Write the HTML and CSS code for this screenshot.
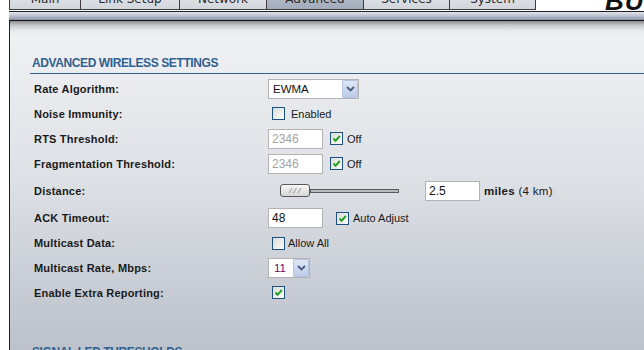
FILE: index.html
```html
<!DOCTYPE html>
<html>
<head>
<meta charset="utf-8">
<link rel="stylesheet" href="styles.css">
</head>
<body>
<div class="top">
  <nav class="tabs">
    <span class="tab t-main">Main</span>
    <span class="tab t-link">Link Setup</span>
    <span class="tab t-net">Network</span>
    <span class="tab t-adv sel">Advanced</span>
    <span class="tab t-srv">Services</span>
    <span class="tab t-sys">System</span>
  </nav>
  <span class="logo">BULLET</span>
</div>
<div class="bar"></div>
<div class="panel">
  <h2 class="sec">ADVANCED WIRELESS SETTINGS</h2>
  <div class="form">
    <div class="row h25">
      <span class="lbl">Rate Algorithm:</span>
      <span class="ctl">
        <span class="sel-box w90"><span class="val">EWMA</span><span class="arrow"><svg width="9" height="6" viewBox="0 0 9 6"><path d="M1 1 L4.5 4.5 L8 1" stroke="#4a5d80" stroke-width="1.8" fill="none"/></svg></span></span>
      </span>
    </div>
    <div class="row h25">
      <span class="lbl">Noise Immunity:</span>
      <span class="ctl ind">
        <span class="cb"></span><span class="txt g6">Enabled</span>
      </span>
    </div>
    <div class="row h25">
      <span class="lbl">RTS Threshold:</span>
      <span class="ctl">
        <span class="inp dis">2346</span>
        <span class="cb m7"><svg width="9" height="9" viewBox="0 0 9 9"><path d="M1.5 4.5 L3.6 6.8 L7.8 2" stroke="#22a022" stroke-width="2" fill="none"/></svg></span><span class="txt g4">Off</span>
      </span>
    </div>
    <div class="row h25">
      <span class="lbl">Fragmentation Threshold:</span>
      <span class="ctl">
        <span class="inp dis">2346</span>
        <span class="cb m7"><svg width="9" height="9" viewBox="0 0 9 9"><path d="M1.5 4.5 L3.6 6.8 L7.8 2" stroke="#22a022" stroke-width="2" fill="none"/></svg></span><span class="txt g4">Off</span>
      </span>
    </div>
    <div class="row h29">
      <span class="lbl">Distance:</span>
      <span class="ctl">
        <span class="slider">
          <span class="knob"><svg width="14" height="5" viewBox="0 0 14 5"><path d="M1 5 L4 0 M5.5 5 L8.5 0 M10 5 L13 0" stroke="#9a9a9a" stroke-width="1" fill="none"/></svg></span>
          <span class="track"></span>
        </span>
        <span class="inp dist">2.5</span>
        <span class="unit"><b>miles</b> (4 km)</span>
      </span>
    </div>
    <div class="row h26">
      <span class="lbl">ACK Timeout:</span>
      <span class="ctl">
        <span class="inp">48</span>
        <span class="cb m13"><svg width="9" height="9" viewBox="0 0 9 9"><path d="M1.5 4.5 L3.6 6.8 L7.8 2" stroke="#22a022" stroke-width="2" fill="none"/></svg></span><span class="txt g4">Auto Adjust</span>
      </span>
    </div>
    <div class="row h24">
      <span class="lbl">Multicast Data:</span>
      <span class="ctl ind">
        <span class="cb"></span><span class="txt g3">Allow All</span>
      </span>
    </div>
    <div class="row h25">
      <span class="lbl">Multicast Rate, Mbps:</span>
      <span class="ctl">
        <span class="sel-box w42"><span class="val purple">11</span><span class="arrow"><svg width="9" height="6" viewBox="0 0 9 6"><path d="M1 1 L4.5 4.5 L8 1" stroke="#4a5d80" stroke-width="1.8" fill="none"/></svg></span></span>
      </span>
    </div>
    <div class="row h25">
      <span class="lbl">Enable Extra Reporting:</span>
      <span class="ctl ind">
        <span class="cb"><svg width="9" height="9" viewBox="0 0 9 9"><path d="M1.5 4.5 L3.6 6.8 L7.8 2" stroke="#22a022" stroke-width="2" fill="none"/></svg></span>
      </span>
    </div>
  </div>
  <h2 class="sec sec2">SIGNAL LED THRESHOLDS</h2>
</div>
</body>
</html>
```
FILE: styles.css
```css
html, body {
  margin: 0;
  padding: 0;
  background: #ffffff;
  overflow: hidden;
  width: 644px;
  height: 350px;
}

body {
  font-family: "Liberation Sans", Arial, sans-serif;
  color: #1c1c1c;
}

.top {
  height: 10px;
  overflow: hidden;
  display: flex;
  align-items: flex-end;
  padding-left: 9px;
}

.tabs {
  display: flex;
  align-items: flex-end;
  flex-shrink: 0;
}

.tab {
  box-sizing: border-box;
  height: 26px;
  padding-top: 4px;
  line-height: 22px;
  text-align: center;
  font-family: "DejaVu Sans", Verdana, sans-serif;
  font-size: 12px;
  color: #2a2a2a;
  background: linear-gradient(to bottom, #eceef1, #d2d6dc);
  border-right: 1px solid #3c3c3c;
  border-bottom: 1px solid #3c3c3c;
  flex-shrink: 0;
  white-space: nowrap;
}

.tab.sel {
  background: linear-gradient(to bottom, #c4cad4, #a2abbb);
}

.t-main { width: 72px; border-left: 1px solid #3c3c3c; }
.t-link { width: 99px; }
.t-net { width: 87px; }
.t-adv { width: 97px; }
.t-srv { width: 86px; }
.t-sys { width: 86px; }

.logo {
  flex-shrink: 0;
  margin-left: 69px;
  margin-bottom: -4px;
  font-size: 26px;
  line-height: 1;
  font-weight: bold;
  font-style: italic;
  color: #111;
  white-space: nowrap;
  letter-spacing: 1px;
}

.bar {
  margin-top: 1px;
  margin-left: 9px;
  height: 8px;
  border-top: 1px solid #1e1e1e;
  border-bottom: 1px solid #141414;
  background: linear-gradient(to bottom, #e2e5ec, #b9bfcd 50%, #8991a6);
}

.panel {
  margin-left: 9px;
  border-left: 1px solid #222;
  height: 329px;
  box-sizing: border-box;
  padding-top: 35px;
  padding-left: 20px;
  background: linear-gradient(to bottom, #8a8a8a 0, #c4c5c8 4px, #e6e7ea 9px, #eef0f2 14px, #eaecef 60px, #dde0e5 160px, #c9cdd5 260px, #bcc1cb 329px);
}

.sec {
  margin: 0;
  padding: 0 0 3px 2px;
  font-size: 12px;
  line-height: 14px;
  font-weight: bold;
  letter-spacing: -0.4px;
  color: #31618f;
  border-bottom: 1px solid #31618f;
}

.sec2 {
  margin-top: 40px;
  border-bottom: none;
}

.form {
  margin-top: 2px;
  display: flex;
  flex-direction: column;
}

.row {
  display: grid;
  grid-template-columns: 238px 1fr;
  align-items: center;
}

.h24 { height: 24px; }
.h25 { height: 25px; }
.h26 { height: 26px; }
.h29 { height: 29px; }

.lbl {
  padding-left: 4px;
  font-size: 11px;
  font-weight: bold;
  letter-spacing: 0.2px;
  color: #1a1a1a;
}

.ctl {
  display: flex;
  align-items: center;
}

.ind { padding-left: 4px; }

.txt {
  font-size: 11px;
  color: #1a1a1a;
}

.g3 { margin-left: 3px; }
.g4 { margin-left: 4px; }
.g6 { margin-left: 6px; }
.m7 { margin-left: 7px; }
.m13 { margin-left: 13px; }

.cb {
  box-sizing: border-box;
  width: 13px;
  height: 13px;
  border: 1px solid #1c5180;
  background: linear-gradient(135deg, #dcdcd7, #fbfbf9);
  display: inline-flex;
  align-items: center;
  justify-content: center;
  flex-shrink: 0;
}

.inp {
  box-sizing: border-box;
  width: 55px;
  height: 20px;
  border: 1px solid #b3b3b3;
  background: #ffffff;
  font-size: 12px;
  line-height: 18px;
  padding-left: 3px;
  color: #111;
}

.inp.dis { color: #a3a3a3; }

.inp.dist { margin-left: 26px; }

.unit {
  margin-left: 4px;
  font-size: 11.5px;
  letter-spacing: 0.3px;
  color: #1a1a1a;
}

.sel-box {
  box-sizing: border-box;
  height: 20px;
  border: 1px solid #b3b3b3;
  background: #ffffff;
  display: flex;
  align-items: stretch;
  justify-content: space-between;
}

.w90 { width: 91px; }
.w42 { width: 42px; }

.val {
  font-size: 11.5px;
  line-height: 18px;
  padding-left: 4px;
  color: #111;
}

.val.purple { color: #5a0f6e; padding-left: 5px; }

.arrow {
  box-sizing: border-box;
  width: 16px;
  border: 1px solid #b6c6e2;
  border-radius: 1px;
  background: linear-gradient(to bottom, #dfe7f6, #bccbe6);
  display: flex;
  align-items: center;
  justify-content: center;
}

.slider {
  margin-left: 12px;
  display: flex;
  align-items: center;
}

.knob {
  box-sizing: border-box;
  width: 30px;
  height: 13px;
  border: 1px solid #5a5a5a;
  border-radius: 3px;
  background: linear-gradient(to bottom, #f7f7f7, #d6d6d6);
  display: flex;
  align-items: center;
  justify-content: center;
}

.track {
  box-sizing: border-box;
  width: 89px;
  height: 4px;
  border: 1px solid #555a5a;
  background: #b9bcbc;
}
```
